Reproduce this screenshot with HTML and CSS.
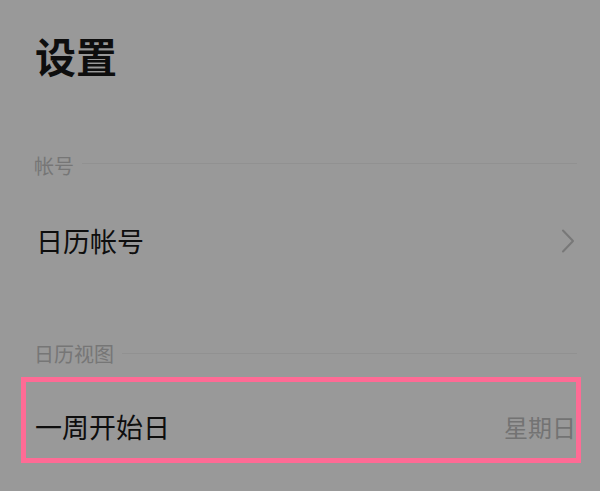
FILE: index.html
```html
<!DOCTYPE html>
<html lang="zh-CN">
<head>
<meta charset="utf-8">
<title>设置</title>
<link rel="stylesheet" href="styles.css">
</head>
<body>
<div class="page">
  <h1 class="title">设置</h1>

  <div class="group-label group-account">
    <span class="label-text">帐号</span>
    <span class="label-line"></span>
  </div>
  <div class="row">
    <span class="row-text">日历帐号</span>
    <svg class="chevron" width="14" height="24" viewBox="0 0 14 24" aria-hidden="true">
      <path d="M2 1.5 L12 12 L2 22.5" fill="none" stroke="#787878" stroke-width="2" stroke-linecap="round" stroke-linejoin="round"/>
    </svg>
  </div>

  <div class="group-label group-view">
    <span class="label-text">日历视图</span>
    <span class="label-line"></span>
  </div>
  <div class="highlight">
    <div class="row-inner">
      <span class="row-text">一周开始日</span>
      <span class="row-value">星期日</span>
    </div>
  </div>
</div>
</body>
</html>
```

FILE: styles.css
```css
html, body {
  margin: 0;
  padding: 0;
  background: #999999;
}

body {
  font-family: "Noto Sans CJK SC", "Noto Sans", sans-serif;
  color: #0e0e0e;
  width: 600px;
  height: 491px;
  overflow: hidden;
}

.page {
  display: flex;
  flex-direction: column;
}

.title {
  margin: 0;
  padding-left: 35px;
  height: 110px;
  line-height: 110px;
  font-size: 41px;
  font-weight: 700;
}

.group-label {
  display: flex;
  align-items: center;
  height: 40px;
  padding-left: 34px;
  padding-right: 23px;
}

.group-account {
  margin-top: 36px;
}

.group-view {
  margin-top: 38px;
}

.label-text {
  font-size: 20px;
  line-height: 40px;
  color: #767676;
}

.label-line {
  flex: 1;
  height: 1px;
  background: #919191;
  margin-left: 8px;
}

.group-account .label-line {
  margin-bottom: 6px;
}

.group-view .label-line {
  margin-bottom: 2px;
}

.row {
  display: flex;
  align-items: center;
  justify-content: space-between;
  height: 110px;
  padding-left: 36px;
  padding-right: 25px;
}

.row-text {
  font-size: 27px;
  line-height: 30px;
}

.chevron {
  display: block;
}

.highlight {
  margin-top: 3px;
  margin-left: 21px;
  width: 560px;
  height: 86px;
  box-sizing: border-box;
  border: 5px solid #ff6b95;
  padding: 30px 0 16px 9px;
}

.row-inner {
  display: flex;
  align-items: center;
  justify-content: space-between;
  height: 30px;
}

.row-value {
  font-size: 24px;
  line-height: 30px;
  color: #737373;
}
```
